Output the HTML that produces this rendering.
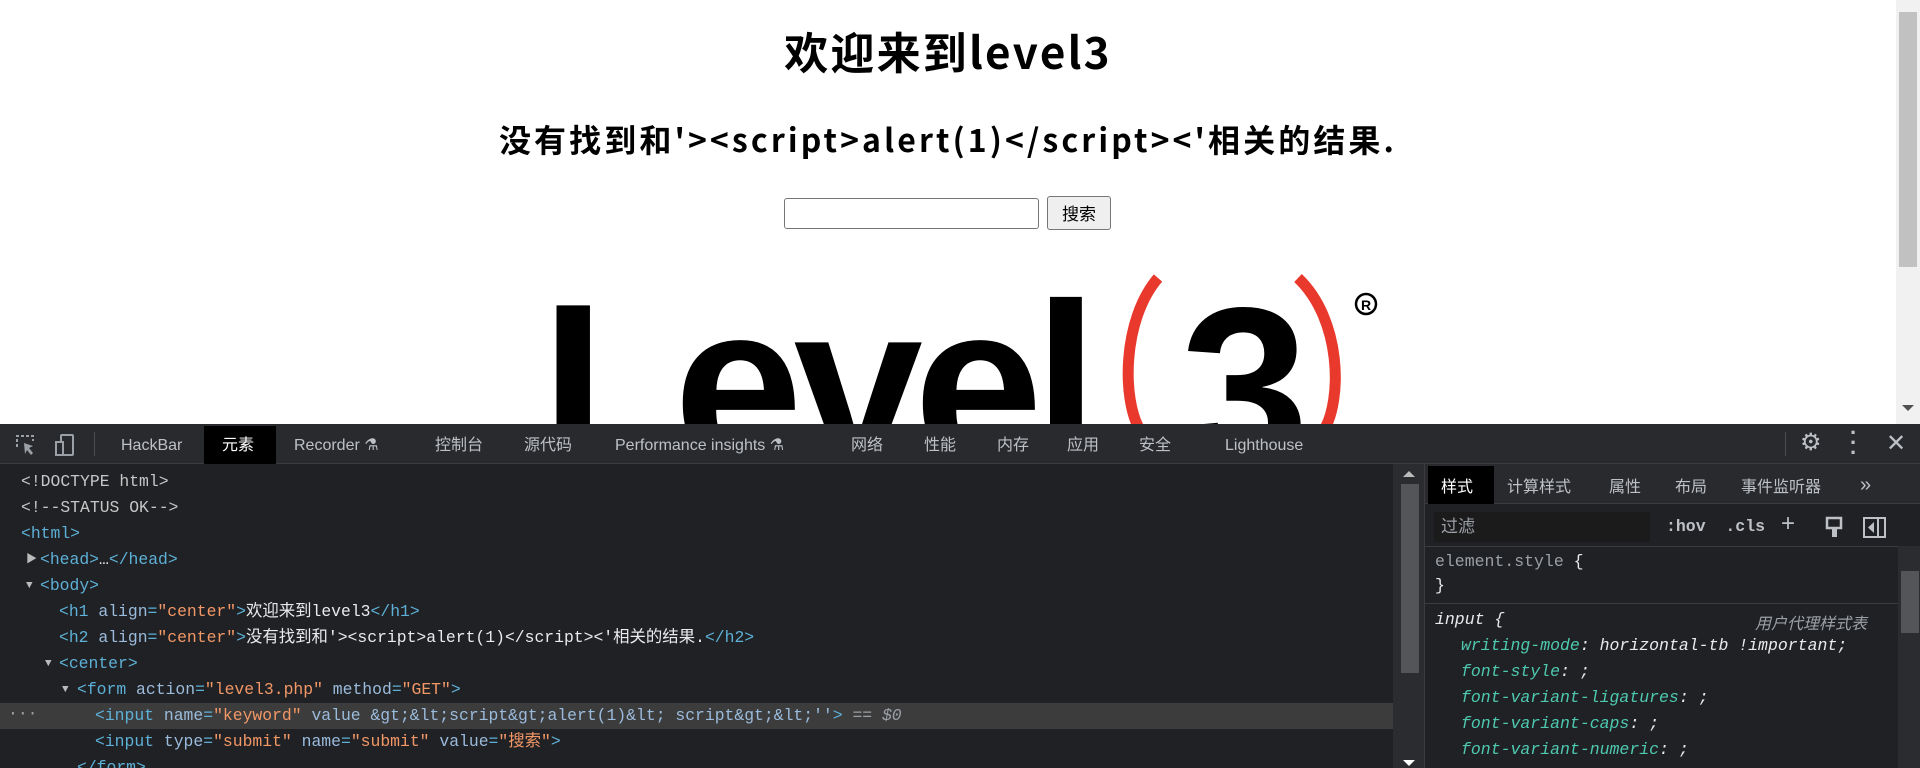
<!DOCTYPE html>
<html><head><meta charset="utf-8"><style>
*{margin:0;padding:0;box-sizing:border-box}
body{width:1920px;height:768px;overflow:hidden;background:#fff;font-family:"Liberation Sans","Noto Sans CJK SC",sans-serif;position:relative}
.a{position:absolute;white-space:nowrap}
.page{position:absolute;left:0;top:0;width:1896px;height:424px;overflow:hidden;background:#fff}
h1{position:absolute;left:0;width:1896px;top:18px;text-align:center;font-size:44px;font-weight:bold;line-height:64px;font-family:"Noto Sans CJK SC",sans-serif;letter-spacing:2.2px}
h2{position:absolute;left:0;width:1896px;top:116px;text-align:center;font-size:32px;font-weight:bold;line-height:46px;font-family:"Noto Sans CJK SC",sans-serif;letter-spacing:3.1px}
.inp{position:absolute;left:784px;top:198px;width:255px;height:31px;border:1px solid #767676;border-radius:3px}
.btn{position:absolute;left:1047px;top:196px;width:64px;height:34px;border:1px solid #767676;border-radius:3px;background:#efefef;font-size:17px;text-align:center;line-height:32px;font-family:"Noto Sans CJK SC",sans-serif}
.dt{position:absolute;left:0;top:424px;width:1920px;height:344px;background:#202124;color:#e8eaed;overflow:hidden}
.tb{position:absolute;left:0;top:0;width:1920px;height:40px;background:#292a2d;border-bottom:1px solid #3c3c3f;font-size:16px;color:#bdc1c6;font-family:"Liberation Sans","Noto Sans CJK SC",sans-serif}
.tb .t{position:absolute;top:2px;height:40px;line-height:40px;white-space:nowrap}
.code{font-family:"Liberation Mono","Noto Sans CJK SC",monospace;font-size:16.4px;line-height:26px}
.tg{color:#5db0d7}.an{color:#9bbbdc}.av{color:#f29766}.tx{color:#e8eaed}
.st{font-family:"Liberation Mono","Noto Sans CJK SC",monospace;font-size:16.5px}
</style></head><body>
<div class="page">
<h1>欢迎来到level3</h1>
<h2>没有找到和'&gt;&lt;script&gt;alert(1)&lt;/script&gt;&lt;'相关的结果.</h2>
<div class="inp"></div>
<div class="btn">搜索</div>
<div class="a" style="left:541px;top:236px;font-size:232px;font-weight:bold;letter-spacing:-9px;line-height:300px;font-family:'Liberation Sans',sans-serif;color:#000">Level</div>
<svg class="a" style="left:1110px;top:270px" width="280" height="160">
<path d="M48 8 C12 50 12 130 30 160" stroke="#e8392c" stroke-width="11" fill="none"/>
<path d="M188 8 C232 50 232 130 214 160" stroke="#e8392c" stroke-width="11" fill="none"/>
<circle cx="256" cy="34" r="10" stroke="#000" stroke-width="2.5" fill="none"/>
<text x="251" y="40" font-size="14" font-weight="bold" font-family="Liberation Sans">R</text>
</svg>
<div class="a" style="left:1180px;top:240px;font-size:232px;font-weight:bold;line-height:300px;font-family:'Liberation Sans',sans-serif">3</div>
</div>
<div class="a" style="left:1896px;top:0;width:24px;height:424px;background:#f1f1f1"></div>
<div class="a" style="left:1899px;top:12px;width:18px;height:255px;background:#c1c1c1"></div>
<div class="a" style="left:1902px;top:405px;width:0;height:0;border-left:6px solid transparent;border-right:6px solid transparent;border-top:6px solid #505050"></div>

<div class="dt">
<div class="tb">
<svg class="a" style="left:14px;top:9px" width="24" height="24"><path d="M3 14V3h16v5" stroke="#9aa0a6" stroke-width="2" fill="none" stroke-dasharray="3 2"/><path d="M10 10l9 3-4 2 4 5-2 2-4-5-2 4z" fill="#9aa0a6"/></svg>
<svg class="a" style="left:53px;top:9px" width="24" height="24"><rect x="8" y="2" width="12" height="20" rx="1" stroke="#9aa0a6" stroke-width="2" fill="none"/><rect x="3" y="9" width="7" height="13" stroke="#9aa0a6" stroke-width="2" fill="#292a2d"/></svg>
<div class="a" style="left:94px;top:8px;width:1px;height:24px;background:#4a4c50"></div>
<div class="t" style="left:121px">HackBar</div>
<div class="a" style="left:204px;top:2px;width:72px;height:38px;background:#000"></div>
<div class="t" style="left:222px;color:#fff">元素</div>
<div class="t" style="left:294px">Recorder ⚗</div>
<div class="t" style="left:435px">控制台</div>
<div class="t" style="left:524px">源代码</div>
<div class="t" style="left:615px">Performance insights ⚗</div>
<div class="t" style="left:851px">网络</div>
<div class="t" style="left:924px">性能</div>
<div class="t" style="left:997px">内存</div>
<div class="t" style="left:1067px">应用</div>
<div class="t" style="left:1139px">安全</div>
<div class="t" style="left:1225px">Lighthouse</div>
<div class="a" style="left:1785px;top:8px;width:1px;height:24px;background:#4a4c50"></div>
<div class="a" style="left:1800px;top:4px;font-size:24px;color:#bdc1c6">⚙</div>
<div class="a" style="left:1850px;top:4px;font-size:22px;font-weight:bold;line-height:10px;color:#bdc1c6">·<br>·<br>·</div>
<div class="a" style="left:1886px;top:5px;font-size:24px;color:#bdc1c6">✕</div>
</div>

<div class="a" style="left:0;top:40px;width:1393px;height:304px" >
<div class="a" style="left:0;top:239px;width:1393px;height:26px;background:#3c3c3c"></div>
<div class="a code" style="left:8px;top:237px;color:#9aa0a6">···</div>
<div class="a code" style="left:21px;top:5px;color:#c6c6c6">&lt;!DOCTYPE html&gt;</div>
<div class="a code" style="left:21px;top:31px;color:#c6c6c6">&lt;!--STATUS OK--&gt;</div>
<div class="a code tg" style="left:21px;top:57px">&lt;html&gt;</div>
<div class="a code" style="left:26px;top:83px;font-size:11px;color:#bbb">▶</div>
<div class="a code tg" style="left:40px;top:83px">&lt;head&gt;<span class="tx">…</span>&lt;/head&gt;</div>
<div class="a code" style="left:26px;top:109px;font-size:11px;color:#bbb">▼</div>
<div class="a code tg" style="left:40px;top:109px">&lt;body&gt;</div>
<div class="a code tg" style="left:59px;top:135px">&lt;h1 <span class="an">align</span>=<span class="av">"center"</span>&gt;<span class="tx">欢迎来到level3</span>&lt;/h1&gt;</div>
<div class="a code tg" style="left:59px;top:161px">&lt;h2 <span class="an">align</span>=<span class="av">"center"</span>&gt;<span class="tx">没有找到和'&gt;&lt;script&gt;alert(1)&lt;/script&gt;&lt;'相关的结果.</span>&lt;/h2&gt;</div>
<div class="a code" style="left:45px;top:187px;font-size:11px;color:#bbb">▼</div>
<div class="a code tg" style="left:59px;top:187px">&lt;center&gt;</div>
<div class="a code" style="left:62px;top:213px;font-size:11px;color:#bbb">▼</div>
<div class="a code tg" style="left:77px;top:213px">&lt;form <span class="an">action</span>=<span class="av">"level3.php"</span> <span class="an">method</span>=<span class="av">"GET"</span>&gt;</div>
<div class="a code tg" style="left:95px;top:239px">&lt;input <span class="an">name</span>=<span class="av">"keyword"</span> <span class="an">value &amp;gt;&amp;lt;script&amp;gt;alert(1)&amp;lt; script&amp;gt;&amp;lt;''</span>&gt; <span style="color:#9aa0a6">== <i>$0</i></span></div>
<div class="a code tg" style="left:95px;top:265px">&lt;input <span class="an">type</span>=<span class="av">"submit"</span> <span class="an">name</span>=<span class="av">"submit"</span> <span class="an">value</span>=<span class="av">"搜索"</span>&gt;</div>
<div class="a code tg" style="left:77px;top:291px">&lt;/form&gt;</div>
</div>
<div class="a" style="left:1393px;top:40px;width:31px;height:304px;background:#2b2c2f"></div>
<div class="a" style="left:1401px;top:60px;width:18px;height:189px;background:#545558"></div>
<div class="a" style="left:1403px;top:47px;border-left:6px solid transparent;border-right:6px solid transparent;border-bottom:6px solid #bbb"></div>
<div class="a" style="left:1403px;top:336px;border-left:6px solid transparent;border-right:6px solid transparent;border-top:6px solid #fff"></div>

<div class="a" style="left:1424px;top:40px;width:496px;height:304px;background:#202124;border-left:1px solid #3c3c3f">
<div class="a" style="left:0;top:0;width:496px;height:40px;background:#292a2d;border-bottom:1px solid #3c3c3f;font-size:16px;color:#bdc1c6">
<div class="a" style="left:3px;top:2px;width:66px;height:38px;background:#000"></div>
<div class="a" style="left:16px;top:4px;line-height:40px;color:#fff">样式</div>
<div class="a" style="left:82px;top:4px;line-height:40px">计算样式</div>
<div class="a" style="left:184px;top:4px;line-height:40px">属性</div>
<div class="a" style="left:250px;top:4px;line-height:40px">布局</div>
<div class="a" style="left:316px;top:4px;line-height:40px">事件监听器</div>
<div class="a" style="left:435px;top:2px;line-height:38px;font-size:20px">»</div>
</div>
<div class="a" style="left:9px;top:48px;width:216px;height:30px;background:#1b1b1c"></div>
<div class="a" style="left:16px;top:49px;line-height:28px;font-size:17px;color:#9aa0a6">过滤</div>
<div class="a st" style="left:241px;top:53px;font-weight:bold;color:#bdc1c6">:hov&nbsp; .cls</div>
<div class="a" style="left:356px;top:46px;font-size:24px;color:#bdc1c6">+</div>
<svg class="a" style="left:398px;top:52px" width="24" height="24"><rect x="4" y="2" width="14" height="10" stroke="#bdc1c6" stroke-width="2.5" fill="none"/><rect x="9" y="12" width="5" height="9" fill="#bdc1c6"/></svg>
<svg class="a" style="left:438px;top:53px" width="24" height="24"><rect x="1" y="1" width="21" height="19" stroke="#bdc1c6" stroke-width="2" fill="none"/><path d="M15 1v19" stroke="#bdc1c6" stroke-width="2"/><path d="M11 5v11l-6-5.5z" fill="#bdc1c6"/></svg>
<div class="a" style="left:0;top:82px;width:473px;height:1px;background:#3c3c3f"></div>
<div class="a st" style="left:10px;top:88px;color:#9aa0a6">element.style <span style="color:#e8eaed">{</span></div>
<div class="a st" style="left:10px;top:112px;color:#e8eaed">}</div>
<div class="a" style="left:0;top:139px;width:473px;height:1px;background:#3c3c3f"></div>
<div class="a st" style="left:10px;top:146px;color:#e8eaed;font-style:italic">input {</div>
<div class="a" style="left:330px;top:146px;font-size:16px;color:#9aa0a6;font-style:italic">用户代理样式表</div>
<div class="a st" style="left:36px;top:169px;font-style:italic;line-height:26px;color:#e8eaed">
<span style="color:#4ec9b0">writing-mode</span>: horizontal-tb !important;<br>
<span style="color:#4ec9b0">font-style</span>: ;<br>
<span style="color:#4ec9b0">font-variant-ligatures</span>: ;<br>
<span style="color:#4ec9b0">font-variant-caps</span>: ;<br>
<span style="color:#4ec9b0">font-variant-numeric</span>: ;<br>
<span style="color:#4ec9b0">font-variant-east-asian</span>: ;</div>
<div class="a" style="left:473px;top:82px;width:23px;height:222px;background:#2b2c2f"></div>
<div class="a" style="left:476px;top:107px;width:18px;height:62px;background:#545558"></div>
</div>
</div>
</body></html>
